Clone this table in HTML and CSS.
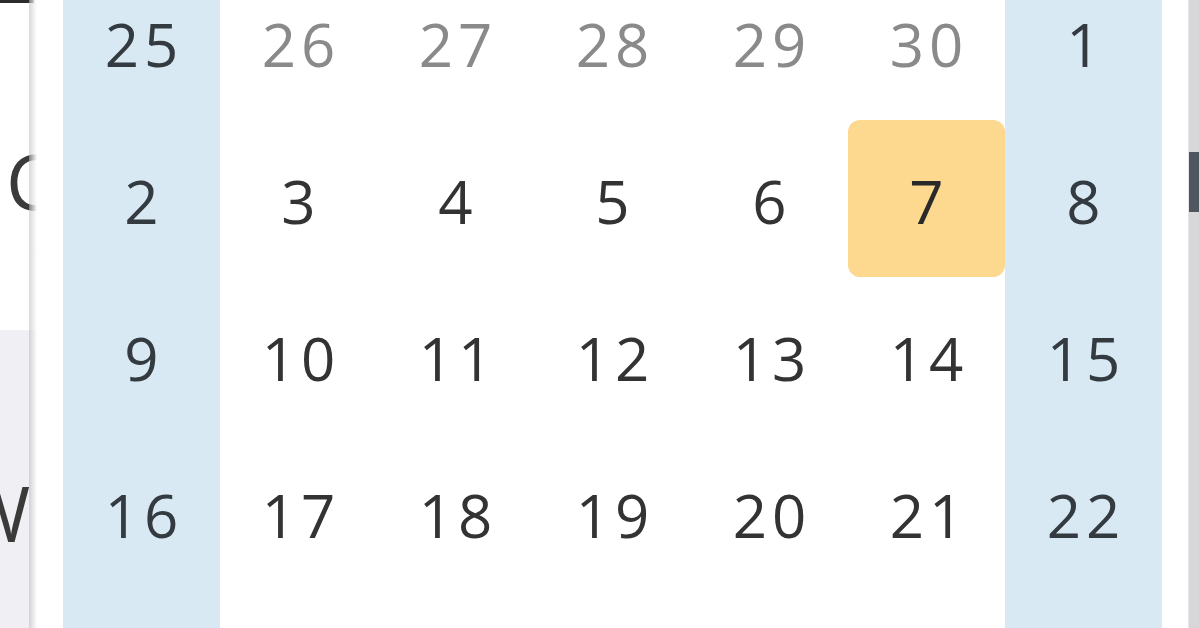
FILE: index.html
```html
<!DOCTYPE html>
<html>
<head>
<meta charset="utf-8">
<link rel="stylesheet" href="styles.css">
</head>
<body>
<div class="stage">
  <div class="backdrop-left">
    <div class="bl-top"></div>
    <div class="bl-white">
      <span class="bl-letter bl-c">C</span>
    </div>
    <div class="bl-gray">
      <span class="bl-letter bl-w">W</span>
    </div>
    <div class="bl-shadow"></div>
  </div>
  <div class="popover">
    <div class="grid">
      <div class="cell weekend">25</div>
      <div class="cell muted">26</div>
      <div class="cell muted">27</div>
      <div class="cell muted">28</div>
      <div class="cell muted">29</div>
      <div class="cell muted">30</div>
      <div class="cell weekend">1</div>

      <div class="cell weekend">2</div>
      <div class="cell">3</div>
      <div class="cell">4</div>
      <div class="cell">5</div>
      <div class="cell">6</div>
      <div class="cell today-cell"><span class="today">7</span></div>
      <div class="cell weekend">8</div>

      <div class="cell weekend">9</div>
      <div class="cell">10</div>
      <div class="cell">11</div>
      <div class="cell">12</div>
      <div class="cell">13</div>
      <div class="cell">14</div>
      <div class="cell weekend">15</div>

      <div class="cell weekend">16</div>
      <div class="cell">17</div>
      <div class="cell">18</div>
      <div class="cell">19</div>
      <div class="cell">20</div>
      <div class="cell">21</div>
      <div class="cell weekend">22</div>

      <div class="cell weekend">23</div>
      <div class="cell">24</div>
      <div class="cell">25</div>
      <div class="cell">26</div>
      <div class="cell">27</div>
      <div class="cell">28</div>
      <div class="cell weekend">29</div>
    </div>
  </div>
  <div class="backdrop-right">
    <div class="br-mark"></div>
  </div>
</div>
</body>
</html>
```

FILE: styles.css
```css
html, body {
  margin: 0;
  padding: 0;
  background: #ffffff;
}
body {
  width: 1199px;
  height: 628px;
  overflow: hidden;
  font-family: "Open Sans", "Noto Sans", sans-serif;
}
.stage {
  display: flex;
  width: 1199px;
  height: 628px;
  overflow: hidden;
}
.backdrop-left {
  width: 37px;
  flex: none;
  display: flex;
  flex-direction: column;
  position: relative;
  overflow: hidden;
  background: #ffffff;
}
.bl-top {
  height: 3px;
  background: #2b2b2b;
  margin-right: 3px;
}
.bl-white {
  height: 327px;
  position: relative;
  background: #ffffff;
}
.bl-gray {
  flex: 1;
  position: relative;
  background: #efeff4;
}
.bl-letter {
  position: absolute;
  font-size: 76px;
  line-height: 1;
  color: #3a3a3a;
}
.bl-c {
  left: 6px;
  top: 140px;
}
.bl-w {
  left: -40px;
  top: 145px;
}
.bl-shadow {
  position: absolute;
  right: 0;
  top: 0;
  bottom: 0;
  width: 8px;
  background: linear-gradient(to right, rgba(185,185,190,0.55), rgba(255,255,255,1));
}
.popover {
  flex: none;
  width: 1151px;
  padding: 0 26px 0 26px;
  box-sizing: border-box;
  background: #ffffff;
}
.grid {
  display: grid;
  grid-template-columns: repeat(7, 157px);
  grid-auto-rows: 157px;
  margin-top: -37px;
}
.cell {
  display: flex;
  align-items: center;
  justify-content: center;
  font-size: 60px;
  letter-spacing: 5px;
  color: #333333;
  padding-top: 4px;
  padding-left: 5px;
  box-sizing: border-box;
}
.cell.muted {
  color: #8a8a8a;
}
.cell.weekend {
  background: #d8e9f4;
  color: #333a40;
}
.cell.today-cell {
  padding: 0;
  align-items: stretch;
  justify-content: stretch;
}
.today {
  flex: 1;
  display: flex;
  align-items: center;
  justify-content: center;
  padding-top: 4px;
  padding-left: 5px;
  box-sizing: border-box;
  background: #fdd88f;
  border-radius: 12px;
  color: #2a2a2a;
}
.backdrop-right {
  flex: 1;
  background: #d7d7d9;
  position: relative;
  border-left: 1px solid #e6e6e6;
}
.br-mark {
  position: absolute;
  left: 0;
  right: 0;
  top: 152px;
  height: 60px;
  background: #4f5660;
}
```
